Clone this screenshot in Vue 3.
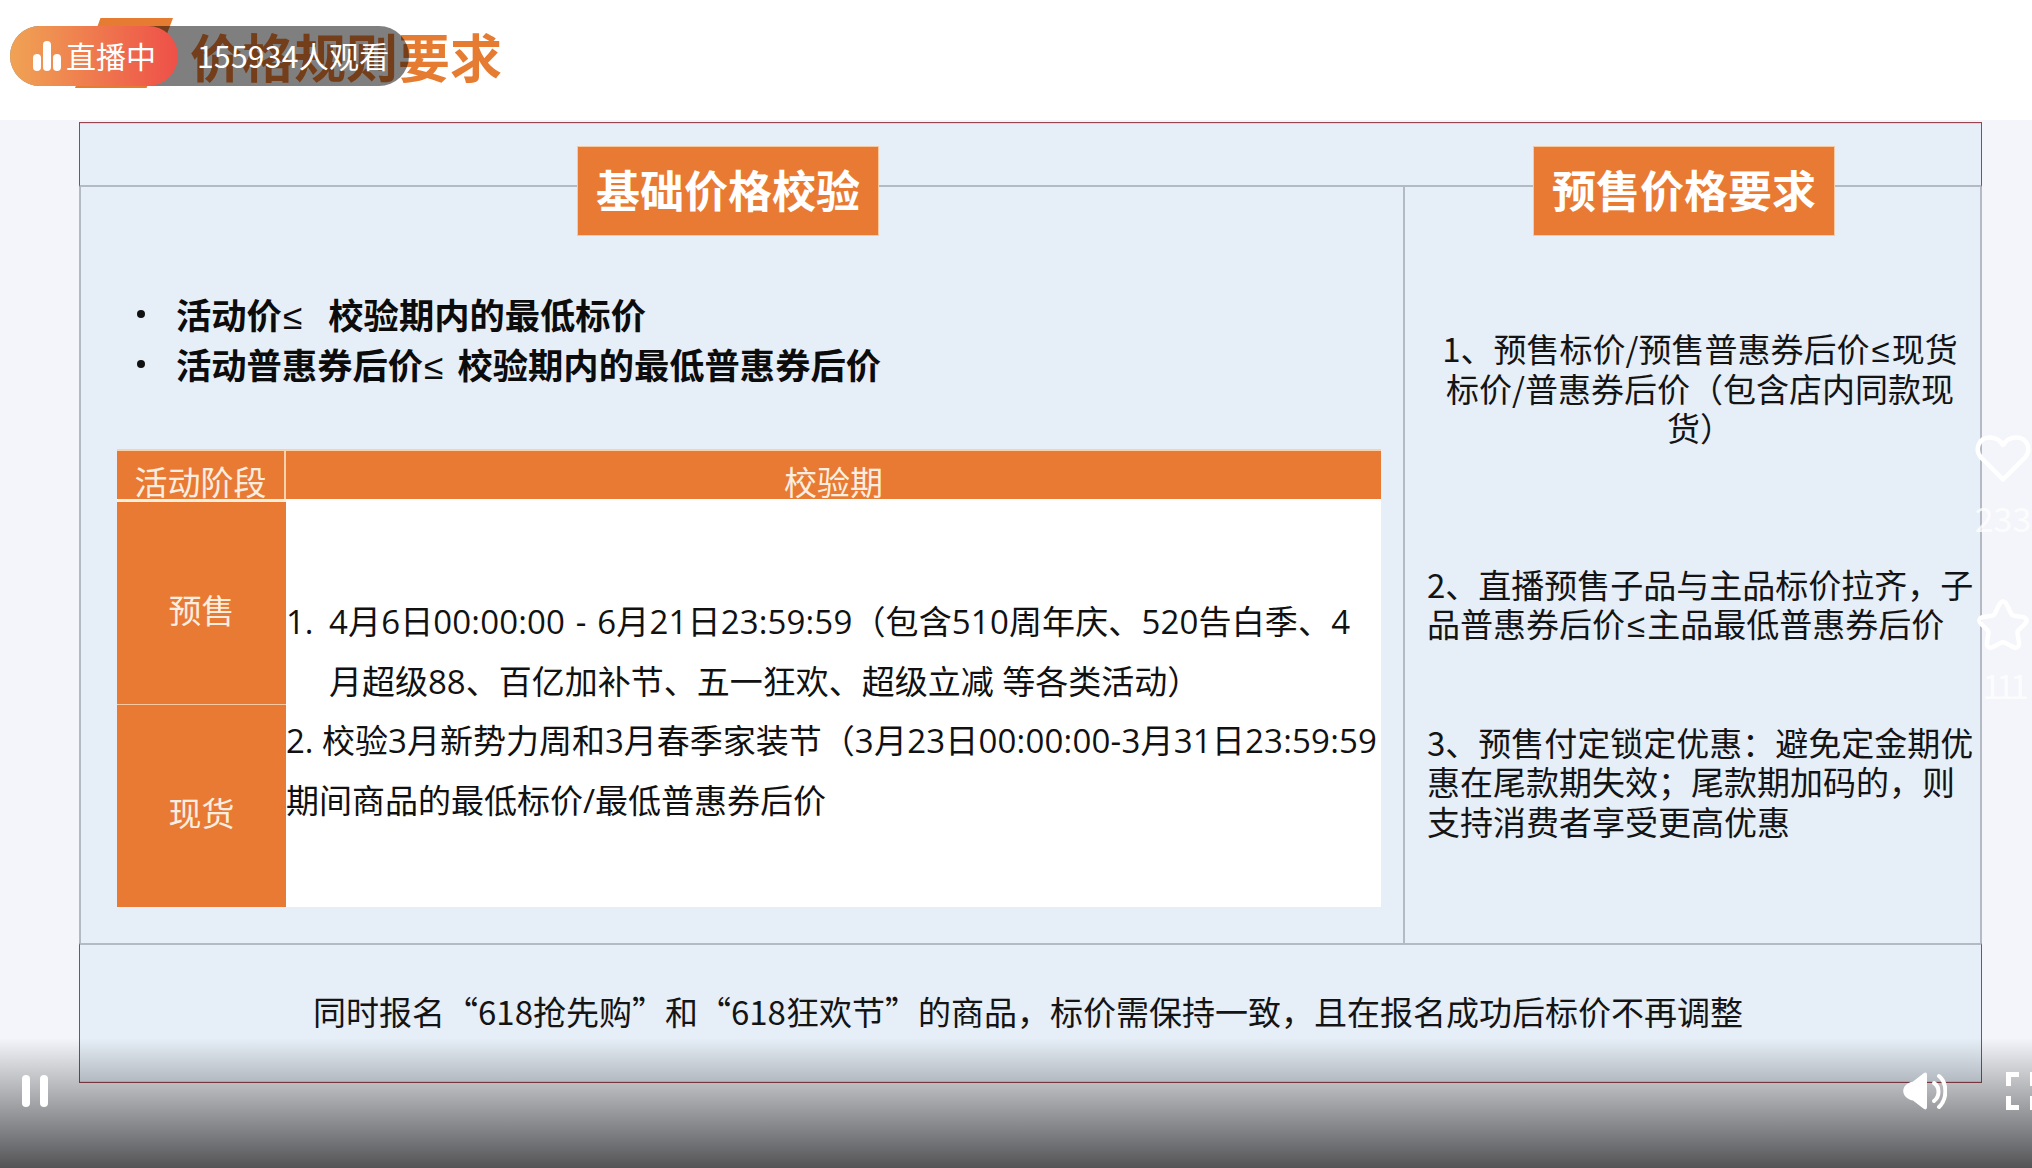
<template>
  <div class="page">
    <header class="title-bar">
      <span class="title-mark"></span>
      <h1 class="title">价格规则要求</h1>
    </header>

    <main class="slide">
      <section class="panel">
        <div class="band">
          <div class="badge badge-a">基础价格校验</div>
          <div class="badge badge-b">预售价格要求</div>
        </div>

        <div class="body">
          <div class="col-left">
            <ul class="rules">
              <li>活动价<span class="le">≤</span><span class="gap-a"></span>校验期内的最低标价</li>
              <li>活动普惠券后价<span class="le">≤</span><span class="gap-b"></span>校验期内的最低普惠券后价</li>
            </ul>
            <div class="tbl">
              <div class="th th-stage">活动阶段</div>
              <div class="th th-period">校验期</div>
              <div class="stage stage-a"><span>预售</span></div>
              <div class="stage stage-b"><span>现货</span></div>
              <div class="period">
                <p class="line-1"><span class="num">1.</span>4月6日00:00:00 - 6月21日23:59:59（包含510周年庆、520告白季、4</p>
                <p class="hang">月超级88、百亿加补节、五一狂欢、超级立减 等各类活动）</p>
                <p>2. 校验3月新势力周和3月春季家装节（<span class="dates">3月23日00:00:00-3月31日23:59:59</span></p>
                <p>期间商品的最低标价/最低普惠券后价</p>
              </div>
            </div>
          </div>
          <div class="col-right">
            <p class="req req-1">1、预售标价/预售普惠券后价<span class="le">≤</span>现货<br />标价/普惠券后价（包含店内同款现<br />货）</p>
            <p class="req req-2">2、直播预售子品与主品标价拉齐，子<br />品普惠券后价<span class="le">≤</span>主品最低普惠券后价</p>
            <p class="req req-3">3、预售付定锁定优惠：避免定金期优<br />惠在尾款期失效；尾款期加码的，则<br />支持消费者享受更高优惠</p>
          </div>
        </div>

        <div class="foot">同时报名“618抢先购”和“618狂欢节”的商品，标价需保持一致，且在报名成功后标价不再调整</div>
      </section>
    </main>

    <div class="live">
      <div class="live-tag">
        <svg class="live-icon" viewBox="0 0 28 30" width="28" height="30">
          <rect x="0" y="13" width="8" height="17" rx="4" />
          <rect x="10" y="0" width="8" height="30" rx="4" />
          <rect x="20" y="13" width="8" height="17" rx="4" />
        </svg>
        <span class="live-text">直播中</span>
      </div>
      <span class="viewers">155934人观看</span>
    </div>

    <aside class="rail">
      <svg class="heart" viewBox="0 0 56 47" width="56" height="47">
        <path d="M28 44.5 L6 22.5 C-1 14 4 2.500 15 2.500 C21 2.500 25.500 6 28 10 C30.500 6 35 2.500 41 2.500 C52 2.500 57 14 50 22.500 Z" />
      </svg>
      <span class="count count-a">233</span>
      <svg class="star" viewBox="0 0 52 51" width="52" height="51">
        <path d="M26 2.500 C28 2.500 29 4 30 6 L34 14.500 C34.700 16 35.500 16.500 37 16.800 L45.500 18 C50 18.700 51 22 47.800 25 L41.500 31.200 C40.500 32.200 40.200 33 40.500 34.500 L42 43.500 C42.700 48 39.500 49.800 36 48 L28.500 44 C27 43.200 25 43.200 23.500 44 L16 48 C12.500 49.800 9.300 48 10 43.500 L11.500 34.500 C11.800 33 11.500 32.200 10.500 31.200 L4.200 25 C1 22 2 18.700 6.500 18 L15 16.800 C16.500 16.500 17.300 16 18 14.500 L22 6 C23 4 24 2.500 26 2.500 Z" />
      </svg>
      <span class="count count-b">111</span>
    </aside>

    <div class="shade"></div>

    <div class="controls">
      <div class="pause"><i></i><i></i></div>
      <svg class="speaker" viewBox="0 0 44 38" width="44" height="38">
        <path class="cone" d="M21 1 Q24 -0.500 24 3 V35 Q24 38.500 21 37 L10 28.500 C-3 26 -3 12 10 9.500 Z" />
        <path class="wave" d="M31 11 C37 15 37 24 31 29" />
        <path class="wave" d="M36 4 C44.500 11 44.500 27 36 35" />
      </svg>
      <svg class="full" viewBox="0 0 26 38" width="26" height="38">
        <path d="M13 2.500 H2.500 V14 M13 35.500 H2.500 V24 M26.500 2.500 H40 M26.500 35.500 H40 M26.500 0 V14 M26.500 38 V24" />
      </svg>
    </div>
  </div>
</template>

<script setup>
</script>

<style>
html, body { margin: 0; background: #fff; overflow: hidden; }
</style>

<style scoped>
.page {
  position: relative;
  display: flex;
  flex-direction: column;
  width: 2032px;
  height: 1168px;
  overflow: hidden;
  font-family: "Noto Sans CJK SC", "Noto Sans", sans-serif;
  color: #111;
}
p, h1, ul { margin: 0; padding: 0; }

.title-bar {
  position: relative;
  flex: 0 0 120px;
  box-sizing: border-box;
  padding: 19px 0 0 190px;
  background: #fff;
}
.title-mark {
  position: absolute;
  left: 75px;
  top: 18px;
  width: 98px;
  height: 70px;
  background: #e67c32;
  clip-path: polygon(26% 0, 100% 0, 73% 100%, 0 100%);
}
.title {
  position: relative;
  font-size: 52px;
  line-height: 74px;
  font-weight: 700;
  color: #e67c32;
}

.slide {
  flex: 1;
  min-height: 0;
  box-sizing: border-box;
  padding: 2px 50px 85px 79px;
  background: #f3f5fa;
}
.panel {
  display: flex;
  flex-direction: column;
  height: 961px;
  background: #e6eef7;
}

.band {
  position: relative;
  z-index: 1;
  display: flex;
  flex: none;
  height: 65px;
  box-sizing: border-box;
  padding: 0 1px;
  border: 1px solid #9a4450;
  border-bottom: 2px solid #b4bac4;
  box-shadow: inset 0 1px 0 rgba(210, 130, 140, 0.25);
}
.badge {
  flex: 0 0 300px;
  height: 88px;
  margin-top: 24px;
  background: #e97a33;
  color: #fff;
  font-size: 44px;
  line-height: 84px;
  font-weight: 700;
  text-align: center;
  box-shadow: 0 0 0 1px #f7c9a0;
}
.badge-a { margin-left: 497px; }
.badge-b { margin-left: 656px; }

.le {
  font-family: "Liberation Sans", sans-serif;
  font-weight: 400;
  line-height: 0;
}

.body {
  display: flex;
  flex: none;
  height: 756px;
  box-sizing: border-box;
  border-left: 2px solid #b4bac4;
  border-right: 2px solid #b4bac4;
}
.col-left {
  flex: 0 0 1322px;
  box-sizing: border-box;
  padding: 102px 0 0 36px;
}
.rules {
  list-style: none;
  height: 160px;
}
.rules li {
  position: relative;
  padding-left: 59px;
  font-size: 35.300px;
  line-height: 50px;
  font-weight: 700;
  white-space: nowrap;
  color: #0c0c0c;
}
.rules li::before {
  content: "";
  position: absolute;
  left: 20px;
  top: 21px;
  width: 8px;
  height: 8px;
  border-radius: 50%;
  background: #111;
}
.rules .le { padding: 0 1px; }
.gap-a { display: inline-block; width: 25px; }
.gap-b { display: inline-block; width: 13px; }

.tbl {
  display: grid;
  grid-template-columns: 169px 1095px;
  grid-template-rows: 50px 206px 202px;
  width: 1264px;
}
.th {
  overflow: hidden;
  background: #e97a33;
  border-top: 2px solid #f8d2ac;
  box-sizing: border-box;
  color: #fbeee0;
  font-size: 33px;
  line-height: 61px;
  height: 50px;
  text-align: center;
  white-space: nowrap;
}
.th-stage { border-right: 2px solid #f8d2ac; }
.stage {
  display: flex;
  align-items: center;
  justify-content: center;
  background: #e97a33;
  color: #fbeee0;
  font-size: 33px;
  grid-column: 1;
  box-sizing: border-box;
  padding-top: 12px;
}
.stage-a { grid-row: 2; border-top: 3px solid #fdeedd; border-bottom: 1px solid #f8c9a0; }
.stage-b { grid-row: 3; }
.period {
  grid-column: 2;
  grid-row: 2 / 4;
  box-sizing: border-box;
  padding-top: 93px;
  background: #fff;
  font-family: "Open Sans", "Noto Sans CJK SC", sans-serif;
  font-size: 33px;
  line-height: 59.500px;
  white-space: nowrap;
  color: #111;
}
.num { display: inline-block; width: 43px; letter-spacing: 0; }
.hang { padding-left: 43px; }
.line-1 { letter-spacing: 0.15px; word-spacing: 2px; }
.dates { letter-spacing: 0.2px; }

.col-right {
  flex: 1;
  box-sizing: border-box;
  padding: 142px 0 0 22px;
  border-left: 2px solid #b4bac4;
}
.req {
  font-size: 33px;
  line-height: 39.500px;
  white-space: nowrap;
  color: #141414;
}
.req .le { padding: 0 2px; }
.req-1 { width: 546px; text-align: center; }
.req-2 { margin-top: 117px; }
.req-3 { margin-top: 79px; }

.foot {
  flex: 1;
  display: flex;
  align-items: center;
  justify-content: center;
  box-sizing: border-box;
  padding: 0 6px 5px 1px;
  border: 1px solid #9a4450;
  border-top: 2px solid #b4bac4;
  box-shadow: inset 0 -1px 0 rgba(210, 130, 140, 0.25);
  font-size: 33px;
  white-space: nowrap;
  color: #141414;
}

.live {
  position: absolute;
  left: 10px;
  top: 26px;
  display: flex;
  align-items: center;
  width: 399px;
  height: 60px;
  border-radius: 30px;
  background: rgba(0, 0, 0, 0.5);
  color: #fff;
  font-size: 30px;
}
.live-tag {
  display: flex;
  align-items: center;
  flex: 0 0 168px;
  height: 60px;
  box-sizing: border-box;
  padding-left: 23px;
  border-radius: 30px;
  background: linear-gradient(90deg, #f0a354, #ee5048);
}
.live-icon { fill: #fff; margin-right: 5px; }
.live-text { margin-bottom: 3px; }
.viewers { margin: 0 0 3px 19px; letter-spacing: 0.3px; white-space: nowrap; }

.rail {
  position: absolute;
  left: 1973px;
  top: 435px;
  display: flex;
  flex-direction: column;
  align-items: center;
  width: 60px;
  color: rgba(255, 255, 255, 0.8);
  font-size: 34px;
  line-height: 34px;
}
.heart, .star { fill: none; stroke: #fff; stroke-width: 4.500px; stroke-linejoin: round; }
.count { white-space: nowrap; }
.count-a { margin-top: 19px; }
.star { margin-top: 64px; }
.count-b { margin-top: 18px; letter-spacing: -5px; }

.shade {
  position: absolute;
  left: 0;
  right: 0;
  top: 1038px;
  bottom: 0;
  background: linear-gradient(180deg, rgba(0, 0, 0, 0), rgba(0, 0, 0, 0.66));
}
.controls {
  position: absolute;
  left: 22px;
  right: 0;
  top: 1072px;
  display: flex;
  align-items: center;
  height: 38px;
}
.pause { display: flex; gap: 10px; margin-right: 1855px; }
.pause i { display: block; width: 8px; height: 32px; border-radius: 4px; background: #fff; }
.speaker { flex: none; margin-right: 59px; }
.cone { fill: #fff; }
.wave { fill: none; stroke: #fff; stroke-width: 4px; stroke-linecap: round; }
.full { flex: none; overflow: visible; fill: none; stroke: #fff; stroke-width: 5px; }
</style>
